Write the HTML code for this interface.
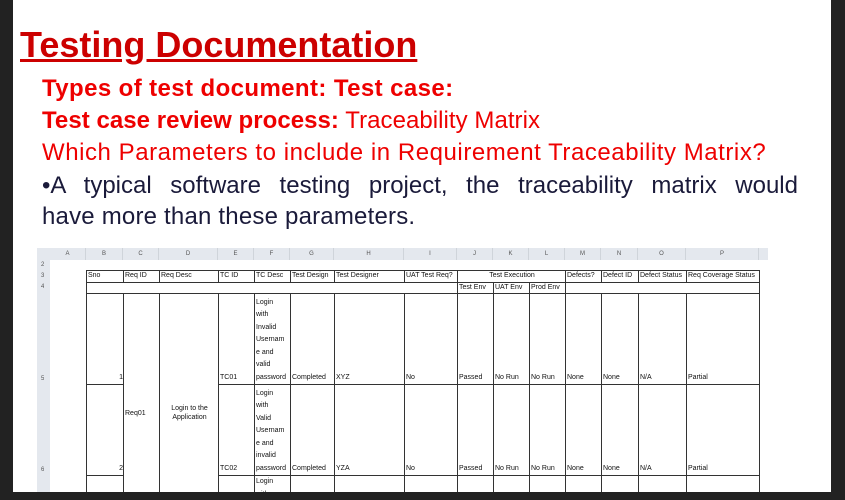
<!DOCTYPE html>
<html><head><style>
body{margin:0;width:845px;height:500px;background:#222;overflow:hidden;position:relative;font-family:"Liberation Sans",sans-serif}
#w{position:absolute;left:13px;top:0;width:818px;height:492px;background:#fff}
.t{position:absolute;white-space:nowrap}
.c{position:absolute;font-size:7px;color:#111;line-height:9px;box-sizing:border-box;padding-left:1px;overflow:hidden}
.b{border:1px solid #333}
.h{position:absolute;background:#e4e8ee;font-size:6px;color:#555;text-align:center;line-height:12px;border-right:1px solid #cfd4da}
</style></head><body>
<div id="w"></div>
<div class="t" style="left:20px;top:24px;font-size:36px;color:#c00;text-decoration:underline;font-weight:bold">Testing Documentation</div>
<div class="t" style="left:42px;top:75px;font-size:24px;color:#e00;font-weight:bold;letter-spacing:0.4px">Types of test document: Test case:</div>
<div class="t" style="left:42px;top:107px;font-size:24px;color:#e00;letter-spacing:0.05px"><b>Test case review process:</b> Traceability Matrix</div>
<div class="t" style="left:42px;top:139px;font-size:24px;color:#e00;letter-spacing:0.55px">Which Parameters to include in Requirement Traceability Matrix?</div>
<div class="t" style="left:42px;top:172px;width:756px;font-size:24px;color:#1a1a3a;text-align:justify;text-align-last:justify;white-space:normal">•A typical software testing project, the traceability matrix would</div>
<div class="t" style="left:42px;top:203px;font-size:24px;color:#1a1a3a;letter-spacing:0.2px">have more than these parameters.</div>
<div style="position:absolute;left:37px;top:248px;width:731px;height:12px;background:#e4e8ee"></div>
<div style="position:absolute;left:37px;top:248px;width:13px;height:244px;background:#e4e8ee"></div>
<div class="h" style="left:50px;top:248px;width:35px">A</div>
<div class="h" style="left:86px;top:248px;width:36px">B</div>
<div class="h" style="left:123px;top:248px;width:35px">C</div>
<div class="h" style="left:159px;top:248px;width:58px">D</div>
<div class="h" style="left:218px;top:248px;width:35px">E</div>
<div class="h" style="left:254px;top:248px;width:35px">F</div>
<div class="h" style="left:290px;top:248px;width:43px">G</div>
<div class="h" style="left:334px;top:248px;width:69px">H</div>
<div class="h" style="left:404px;top:248px;width:52px">I</div>
<div class="h" style="left:457px;top:248px;width:35px">J</div>
<div class="h" style="left:493px;top:248px;width:35px">K</div>
<div class="h" style="left:529px;top:248px;width:35px">L</div>
<div class="h" style="left:565px;top:248px;width:35px">M</div>
<div class="h" style="left:601px;top:248px;width:36px">N</div>
<div class="h" style="left:638px;top:248px;width:47px">O</div>
<div class="h" style="left:686px;top:248px;width:72px">P</div>
<div class="c" style="left:40px;top:261px;color:#555;font-size:6px">2</div>
<div class="c" style="left:40px;top:272px;color:#555;font-size:6px">3</div>
<div class="c" style="left:40px;top:283px;color:#555;font-size:6px">4</div>
<div class="c" style="left:40px;top:375px;color:#555;font-size:6px">5</div>
<div class="c" style="left:40px;top:466px;color:#555;font-size:6px">6</div>
<div class="c b" style="left:86px;top:270px;width:38px;height:13px">Sno</div>
<div class="c b" style="left:123px;top:270px;width:37px;height:13px">Req ID</div>
<div class="c b" style="left:159px;top:270px;width:60px;height:13px">Req Desc</div>
<div class="c b" style="left:218px;top:270px;width:37px;height:13px">TC ID</div>
<div class="c b" style="left:254px;top:270px;width:37px;height:13px">TC Desc</div>
<div class="c b" style="left:290px;top:270px;width:45px;height:13px">Test Design</div>
<div class="c b" style="left:334px;top:270px;width:71px;height:13px">Test Designer</div>
<div class="c b" style="left:404px;top:270px;width:54px;height:13px">UAT Test Req?</div>
<div class="c b" style="left:457px;top:270px;width:109px;height:13px;text-align:center">Test Execution</div>
<div class="c b" style="left:565px;top:270px;width:37px;height:13px">Defects?</div>
<div class="c b" style="left:601px;top:270px;width:38px;height:13px">Defect ID</div>
<div class="c b" style="left:638px;top:270px;width:49px;height:13px">Defect Status</div>
<div class="c b" style="left:686px;top:270px;width:74px;height:13px">Req Coverage Status</div>
<div class="c b" style="left:86px;top:282px;width:372px;height:12px"></div>
<div class="c b" style="left:457px;top:282px;width:37px;height:12px">Test Env</div>
<div class="c b" style="left:493px;top:282px;width:37px;height:12px">UAT Env</div>
<div class="c b" style="left:529px;top:282px;width:37px;height:12px">Prod Env</div>
<div class="c b" style="left:565px;top:282px;width:195px;height:12px"></div>
<div class="c b" style="left:123px;top:293px;width:37px;height:200px;padding-top:115px">Req01</div>
<div class="c b" style="left:159px;top:293px;width:60px;height:200px;padding-top:110px;text-align:center">Login to the<br>Application</div>
<div id="rows"></div>
<script>
var cols=[[86,38],[218,37],[254,37],[290,45],[334,71],[404,54],[457,37],[493,37],[529,37],[565,37],[601,38],[638,49],[686,74]];
var r5=["<div style='text-align:right'>1</div>","TC01","Login<br>with<br>Invalid<br>Usernam<br>e and<br>valid<br>password","Completed","XYZ","No","Passed","No Run","No Run","None","None","N/A","Partial"];
var r6=["<div style='text-align:right'>2</div>","TC02","Login<br>with<br>Valid<br>Usernam<br>e and<br>invalid<br>password","Completed","YZA","No","Passed","No Run","No Run","None","None","N/A","Partial"];
var h="";
[[293,92,r5],[384,92,r6],[475,20,null]].forEach(function(r){
cols.forEach(function(c,i){
var txt=r[2]?r[2][i]:(i==2?"Login<br>with":"");
h+="<div class='c b' style='left:"+c[0]+"px;top:"+r[0]+"px;width:"+c[1]+"px;height:"+r[1]+"px;display:flex;flex-direction:column;justify-content:"+(r[2]?"flex-end":"flex-start")+";line-height:12.5px'><div>"+txt+"</div></div>";
});});
document.getElementById("rows").innerHTML=h;
</script>
<div style="position:absolute;left:0;top:492px;width:845px;height:8px;background:#222"></div>
<div style="position:absolute;left:831px;top:0;width:14px;height:500px;background:#222"></div>
</body></html>
